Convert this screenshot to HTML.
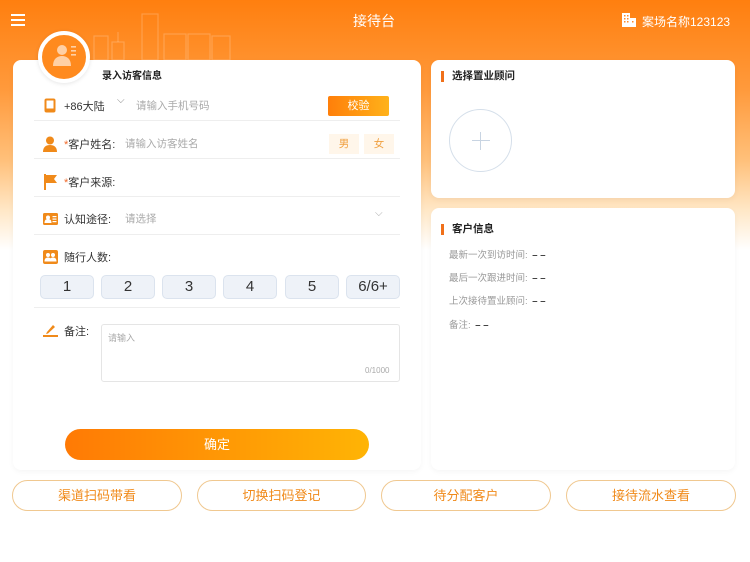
<!DOCTYPE html>
<html><head><meta charset="utf-8"><style>
*{margin:0;padding:0;box-sizing:border-box}
body{width:750px;height:562px;overflow:hidden;position:relative;font-family:"Liberation Sans","Noto Sans CJK SC",sans-serif;background:linear-gradient(180deg,#ff7f0f 0px,#ff9a3c 90px,#ffc07a 160px,#ffe7c6 210px,#fff 250px,#fff 562px);color:#333}
.abs{position:absolute}
.card{position:absolute;background:#fff;border-radius:8px;box-shadow:0 2px 6px rgba(0,0,0,.04)}
.line{position:absolute;left:34px;width:366px;height:1px;background:#eee}
.t{position:absolute;font-size:11px;white-space:nowrap}
.ph{color:#aaa}
.num{position:absolute;top:275px;width:54px;height:24px;background:#eef2f8;border:1px solid #dbe3ee;border-radius:5px;font-size:15px;color:#333;text-align:center;line-height:22px}
.btm{position:absolute;top:480px;height:31px;border:1px solid #f0c890;border-radius:16px;color:#f08a1a;font-size:13px;text-align:center;line-height:29px;background:#fff}
.star{color:#f06a2a}
.hd{position:absolute;font-size:10.5px;font-weight:bold;color:#222;padding-left:8px;border-left:3px solid #f0701a;line-height:11px}
.info{position:absolute;left:449px;font-size:9.5px;color:#999}
.info b{color:#333;font-weight:bold;margin-left:2px}
</style></head><body>
<div class="abs" style="left:11px;top:14px;width:14px;height:2px;background:#fff;box-shadow:0 5px 0 #fff,0 10px 0 #fff"></div>
<div class="t" style="left:353px;top:11px;font-size:14px;color:#fff">接待台</div>
<svg class="abs" style="left:622px;top:13px" width="14" height="14" viewBox="0 0 14 14" fill="#fff"><rect x="0" y="0" width="8" height="14"/><rect x="8" y="5" width="6" height="9"/><g fill="#ff8a2a"><rect x="2" y="2" width="1.5" height="1.5"/><rect x="5" y="2" width="1.5" height="1.5"/><rect x="2" y="5" width="1.5" height="1.5"/><rect x="5" y="5" width="1.5" height="1.5"/><rect x="2" y="8" width="1.5" height="1.5"/><rect x="5" y="8" width="1.5" height="1.5"/><rect x="10" y="8" width="1.5" height="1.5"/></g></svg>
<div class="t" style="left:642px;top:13px;font-size:12px;color:#fff">案场名称123123</div>
<svg class="abs" style="left:92px;top:12px" width="142" height="48" viewBox="0 0 142 48" fill="none" stroke="rgba(255,255,255,.2)" stroke-width="1.2"><rect x="2" y="24" width="14" height="24"/><rect x="20" y="30" width="12" height="18"/><line x1="26" y1="20" x2="26" y2="30"/><rect x="50" y="2" width="16" height="46"/><rect x="72" y="22" width="22" height="26"/><rect x="96" y="22" width="22" height="26"/><rect x="120" y="24" width="18" height="24"/></svg>
<div class="card" style="left:13px;top:60px;width:408px;height:410px"></div>
<div class="abs" style="left:38px;top:31px;width:52px;height:52px;border-radius:50%;background:#ff8a1e;border:4px solid #fff;box-shadow:0 1px 4px rgba(0,0,0,.1)"></div>
<svg class="abs" style="left:52px;top:42px" width="26" height="26" viewBox="0 0 26 26" fill="rgba(255,255,255,.6)"><circle cx="10" cy="8" r="5"/><path d="M1 24c0-7 4-10 9-10s9 3 9 10z"/><rect x="19" y="4" width="5" height="1.6"/><rect x="19" y="8" width="5" height="1.6"/><rect x="19" y="12" width="5" height="1.6"/></svg>
<div class="t" style="left:102px;top:67px;font-size:10px;font-weight:bold;color:#222">录入访客信息</div>
<svg class="abs" style="left:44px;top:98px" width="12" height="15" viewBox="0 0 12 15"><rect x="0.5" y="0.5" width="11" height="14" rx="2" fill="#f08a1a"/><rect x="2.5" y="2.5" width="7" height="8" fill="#fff"/></svg>
<div class="t" style="left:64px;top:98px;font-size:11px;color:#333">+86大陆</div>
<div class="t" style="left:117px;top:95px;font-size:10px;color:#888">⌵</div>
<div class="t ph" style="left:136px;top:98px;font-size:10.5px">请输入手机号码</div>
<div class="abs" style="left:328px;top:96px;width:61px;height:20px;background:linear-gradient(90deg,#ff7f0a,#ffb21a);border-radius:2px;color:#fff;font-size:11px;text-align:center;line-height:20px">校验</div>
<div class="line" style="top:120px"></div>
<svg class="abs" style="left:43px;top:136px" width="14" height="16" viewBox="0 0 14 16" fill="#f08a1a"><circle cx="7" cy="4.5" r="4"/><path d="M0 16c0-5 3-7 7-7s7 2 7 7z"/></svg>
<div class="t" style="left:64px;top:136px"><span class="star">*</span>客户姓名:</div>
<div class="t ph" style="left:125px;top:136px;font-size:10.5px">请输入访客姓名</div>
<div class="abs" style="left:329px;top:134px;width:30px;height:20px;background:#fff6ea;color:#f0a040;font-size:10.5px;text-align:center;line-height:20px">男</div>
<div class="abs" style="left:364px;top:134px;width:30px;height:20px;background:#fff6ea;color:#f0a040;font-size:10.5px;text-align:center;line-height:20px">女</div>
<div class="line" style="top:158px"></div>
<svg class="abs" style="left:44px;top:174px" width="14" height="16" viewBox="0 0 14 16" fill="#f08a1a"><rect x="0" y="0" width="2" height="16"/><path d="M2 1h11l-3 4 3 4H2z"/></svg>
<div class="t" style="left:64px;top:174px"><span class="star">*</span>客户来源:</div>
<div class="line" style="top:196px"></div>
<svg class="abs" style="left:43px;top:213px" width="15" height="12" viewBox="0 0 15 12"><rect width="15" height="12" rx="1.5" fill="#f08a1a"/><circle cx="5" cy="4.5" r="2" fill="#fff"/><path d="M1.5 10c0-3 1.5-4 3.5-4s3.5 1 3.5 4z" fill="#fff"/><rect x="9.5" y="3" width="4" height="1.2" fill="#fff"/><rect x="9.5" y="5.5" width="4" height="1.2" fill="#fff"/><rect x="9.5" y="8" width="4" height="1.2" fill="#fff"/></svg>
<div class="t" style="left:64px;top:211px">认知途径:</div>
<div class="t ph" style="left:125px;top:211px;font-size:10.5px">请选择</div>
<div class="t" style="left:375px;top:208px;font-size:10px;color:#aaa">⌵</div>
<div class="line" style="top:234px"></div>
<svg class="abs" style="left:43px;top:250px" width="15" height="14" viewBox="0 0 15 14"><rect width="15" height="14" rx="2" fill="#f08a1a"/><circle cx="5" cy="5" r="2" fill="#fff"/><circle cx="10" cy="5" r="2" fill="#fff"/><path d="M1.5 11.5c0-3 1.5-4 3.5-4s3.5 1 3.5 4zM6.5 11.5c0-3 1.5-4 3.5-4s3.5 1 3.5 4z" fill="#fff"/></svg>
<div class="t" style="left:64px;top:249px">随行人数:</div>
<div class="num" style="left:40px">1</div>
<div class="num" style="left:101px">2</div>
<div class="num" style="left:162px">3</div>
<div class="num" style="left:223px">4</div>
<div class="num" style="left:285px">5</div>
<div class="num" style="left:346px">6/6+</div>
<div class="line" style="top:307px"></div>
<svg class="abs" style="left:43px;top:323px" width="15" height="14" viewBox="0 0 15 14"><path d="M4 9l6-7 2 2-7 6.5-2 .5z" fill="#f08a1a"/><rect x="0" y="12" width="15" height="2" fill="#f08a1a"/></svg>
<div class="t" style="left:64px;top:323px">备注:</div>
<div class="abs" style="left:101px;top:324px;width:299px;height:58px;border:1px solid #e5e5e5;border-radius:3px"></div>
<div class="t ph" style="left:108px;top:331px;font-size:9px">请输入</div>
<div class="t ph" style="left:365px;top:366px;font-size:8px">0/1000</div>
<div class="abs" style="left:65px;top:429px;width:304px;height:31px;border-radius:16px;background:linear-gradient(90deg,#ff7a05,#ffb405);color:#fff;font-size:13px;text-align:center;line-height:31px">确定</div>
<div class="card" style="left:431px;top:60px;width:304px;height:138px"></div>
<div class="hd" style="left:441px;top:71px">选择置业顾问</div>
<div class="abs" style="left:449px;top:109px;width:63px;height:63px;border-radius:50%;border:1px solid #d5dfea"></div>
<div class="abs" style="left:472px;top:140px;width:18px;height:1px;background:#c8d4e2"></div>
<div class="abs" style="left:480px;top:132px;width:1px;height:18px;background:#c8d4e2"></div>
<div class="card" style="left:431px;top:208px;width:304px;height:262px"></div>
<div class="hd" style="left:441px;top:224px">客户信息</div>
<div class="info" style="top:247px">最新一次到访时间: <b>– –</b></div>
<div class="info" style="top:270px">最后一次跟进时间: <b>– –</b></div>
<div class="info" style="top:293px">上次接待置业顾问: <b>– –</b></div>
<div class="info" style="top:317px">备注: <b>– –</b></div>
<div class="btm" style="left:12px;width:170px">渠道扫码带看</div>
<div class="btm" style="left:197px;width:169px">切换扫码登记</div>
<div class="btm" style="left:381px;width:170px">待分配客户</div>
<div class="btm" style="left:566px;width:170px">接待流水查看</div>
</body></html>
